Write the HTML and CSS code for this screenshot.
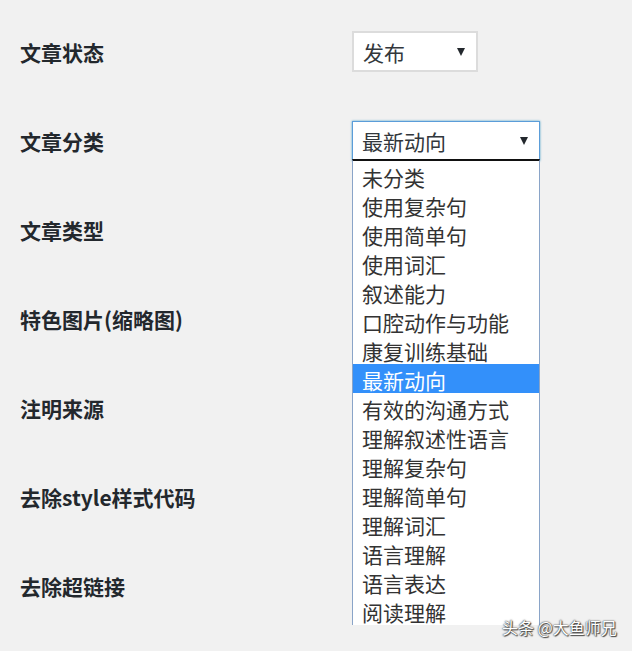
FILE: index.html
```html
<!DOCTYPE html>
<html lang="zh-CN">
<head>
    <meta charset="UTF-8">
    <meta name="viewport" content="width=device-width, initial-scale=1.0">
    <title>文章设置</title>
    <link rel="stylesheet" href="styles.css">
</head>
<body>
    <div class="form-table">
        <div class="row">
            <div class="label">文章状态</div>
            <div class="field">
                <div class="select select-status">
                    <span class="value">发布</span>
                    <span class="arrow"></span>
                </div>
            </div>
        </div>
        <div class="row">
            <div class="label">文章分类</div>
            <div class="field">
                <div class="select select-category is-open">
                    <span class="value">最新动向</span>
                    <span class="arrow"></span>
                    <ul class="dropdown">
                        <li>未分类</li>
                        <li>使用复杂句</li>
                        <li>使用简单句</li>
                        <li>使用词汇</li>
                        <li>叙述能力</li>
                        <li>口腔动作与功能</li>
                        <li>康复训练基础</li>
                        <li class="selected">最新动向</li>
                        <li>有效的沟通方式</li>
                        <li>理解叙述性语言</li>
                        <li>理解复杂句</li>
                        <li>理解简单句</li>
                        <li>理解词汇</li>
                        <li>语言理解</li>
                        <li>语言表达</li>
                        <li>阅读理解</li>
                    </ul>
                </div>
            </div>
        </div>
        <div class="row">
            <div class="label">文章类型</div>
            <div class="field"></div>
        </div>
        <div class="row">
            <div class="label">特色图片(缩略图)</div>
            <div class="field"></div>
        </div>
        <div class="row">
            <div class="label">注明来源</div>
            <div class="field"></div>
        </div>
        <div class="row">
            <div class="label">去除style样式代码</div>
            <div class="field"></div>
        </div>
        <div class="row">
            <div class="label">去除超链接</div>
            <div class="field"></div>
        </div>
    </div>

    <div class="watermark">头条 @大鱼师兄</div>
</body>
</html>
```

FILE: styles.css
```css
* {
    margin: 0;
    padding: 0;
    box-sizing: border-box;
    font-family: "Noto Sans CJK SC", "Liberation Sans", sans-serif;
}
body {
    background-color: #f1f1f1;
    color: #23282d;
    height: 651px;
    overflow: hidden;
    position: relative;
}
.form-table {
    padding: 7px 0 0 20px;
}
.row {
    display: grid;
    grid-template-columns: 332px 1fr;
    align-items: center;
    height: 89px;
}
.label {
    font-size: 21px;
    font-weight: 700;
    line-height: 28px;
    color: #23282d;
}
.field {
    display: flex;
    align-items: center;
}
.select {
    position: relative;
    display: flex;
    align-items: center;
    justify-content: space-between;
    background-color: #fff;
    font-size: 21px;
    line-height: 28px;
    color: #32373c;
    padding: 0 11px 0 9px;
}
.select-status {
    width: 126px;
    height: 41px;
    border: 2px solid #dcdcdc;
}
.select-category {
    width: 188px;
    height: 40px;
    border: 1px solid #5b9dd9;
    box-shadow: 0 0 2px rgba(30, 140, 190, 0.8);
}
.arrow {
    width: 0;
    height: 0;
    border-left: 4px solid transparent;
    border-right: 4px solid transparent;
    border-top: 8px solid #23282d;
}
.dropdown {
    position: absolute;
    top: 37px;
    left: -1px;
    width: 188px;
    list-style: none;
    background-color: #fff;
    border-top: 2px solid #111;
    border-left: 1px solid #8aa4c8;
    border-right: 1px solid #8aa4c8;
    z-index: 2;
}
.dropdown li {
    height: 29px;
    line-height: 26px;
    padding: 3px 0 0 9px;
    font-size: 21px;
    color: #333;
    white-space: nowrap;
}
.dropdown li.selected {
    background-color: #3390fa;
    color: #fff;
}
.watermark {
    position: absolute;
    left: 502px;
    top: 616px;
    font-size: 16px;
    line-height: 22px;
    color: #fff;
    text-shadow: 0 0 1px #333, 0 0 2px #555, 1px 1px 1px #444;
    z-index: 3;
}
```
